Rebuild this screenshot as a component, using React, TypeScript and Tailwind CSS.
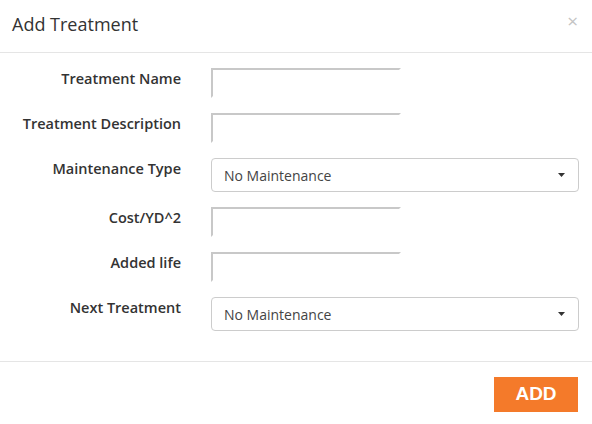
import React from "react";

const labelCls =
  "w-[181px] shrink-0 pt-[1px] text-right text-[14.5px] leading-[20px] font-semibold text-[#333]";

function TextRow({ label }: { label: string }) {
  return (
    <div className="flex items-start">
      <div className={labelCls}>{label}</div>
      <input
        type="text"
        className="ml-[30px] box-border h-[30px] w-[190px] border-2 border-white border-t-[#c8c8c8] border-l-[#c8c8c8] bg-white outline-none"
      />
    </div>
  );
}

function SelectRow({ label }: { label: string }) {
  return (
    <div className="flex items-start">
      <div className={labelCls}>{label}</div>
      <div className="ml-[30px] box-border flex h-[34px] w-[368px] items-center justify-between rounded-[4px] border border-[#cccccc] bg-white pl-[12px] pr-[13px]">
        <span className="text-[14px] text-[#444]">No Maintenance</span>
        <svg width="7" height="4" viewBox="0 0 7 4">
          <path d="M0 0 L7 0 L3.5 4 Z" fill="#333" />
        </svg>
      </div>
    </div>
  );
}

export default function App() {
  return (
    <div
      className="h-[424px] w-[592px] bg-white"
      style={{ fontFamily: '"Open Sans", "Noto Sans", sans-serif' }}
    >
      <div className="flex h-[53px] items-center justify-between border-b border-[#e5e5e5] pl-[12px] pr-[14px]">
        <h4 className="text-[18px] leading-[24px] text-[#333] mb-[5px]">Add Treatment</h4>
        <span className="mb-[10px] text-[19px] leading-none text-[#c4c4c4]">×</span>
      </div>
      <div className="flex flex-col gap-[15px] pt-[15px] pb-[30px]">
        <TextRow label="Treatment Name" />
        <TextRow label="Treatment Description" />
        <SelectRow label="Maintenance Type" />
        <TextRow label="Cost/YD^2" />
        <TextRow label="Added life" />
        <SelectRow label="Next Treatment" />
      </div>
      <div className="flex justify-end border-t border-[#e5e5e5] pt-[15px] pr-[14px]">
        <button
          className="h-[35px] w-[84px] bg-[#f47a2a] text-[19px] font-bold text-white"
          style={{ fontFamily: '"Liberation Sans", Arial, sans-serif' }}
        >
          ADD
        </button>
      </div>
    </div>
  );
}
